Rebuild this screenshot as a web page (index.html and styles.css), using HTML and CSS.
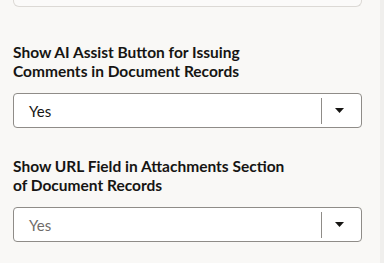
FILE: index.html
```html
<!DOCTYPE html>
<html>
<head>
<meta charset="utf-8">
<link rel="stylesheet" href="styles.css">
</head>
<body>
<div class="page">
  <div class="panel">
    <div class="prev-box"></div>
    <div class="field">
      <div class="label">Show AI Assist Button for Issuing<br>Comments in Document Records</div>
      <div class="select">
        <span class="value">Yes</span>
        <span class="divider"></span>
        <span class="arrow"><svg width="9" height="5" viewBox="0 0 9 5"><path d="M0 0H9L4.5 5Z" fill="#161513"/></svg></span>
      </div>
    </div>
    <div class="field">
      <div class="label">Show URL Field in Attachments Section<br>of Document Records</div>
      <div class="select">
        <span class="value muted">Yes</span>
        <span class="divider"></span>
        <span class="arrow"><svg width="9" height="5" viewBox="0 0 9 5"><path d="M0 0H9L4.5 5Z" fill="#161513"/></svg></span>
      </div>
    </div>
  </div>
  <div class="scroll"></div>
</div>
</body>
</html>
```
FILE: styles.css
```css
html, body {
  margin: 0;
  padding: 0;
  background: #f9f8f6;
}
.page {
  display: flex;
  width: 384px;
  height: 263px;
  overflow: hidden;
  font-family: Lato, "Noto Sans", sans-serif;
}
.panel {
  width: 380px;
  padding: 0 18px 0 13px;
  box-sizing: border-box;
  display: flex;
  flex-direction: column;
}
.scroll {
  width: 4px;
  background: #f0efed;
}
.prev-box {
  height: 6px;
  border: 1px solid #dcd9d5;
  border-top: none;
  border-radius: 0 0 6px 6px;
  background: #fbfaf9;
}
.field {
  margin-top: 36px;
}
.field + .field {
  margin-top: 29px;
}
.label {
  font-size: 15.5px;
  font-weight: 700;
  line-height: 19px;
  color: #161513;
}
.select {
  margin-top: 12px;
  height: 35px;
  box-sizing: border-box;
  border: 1px solid #8f8c88;
  border-radius: 4px;
  background: #fff;
  display: flex;
  align-items: center;
  padding-right: 4px;
}
.value {
  flex: 1;
  padding-left: 15px;
  font-size: 15px;
  color: #161513;
}
.value.muted {
  color: #6f6c69;
}
.divider {
  width: 1px;
  height: 26px;
  background: #8f8c88;
}
.arrow {
  width: 35px;
  display: flex;
  justify-content: center;
  align-items: center;
}
.arrow svg {
  display: block;
}
```
